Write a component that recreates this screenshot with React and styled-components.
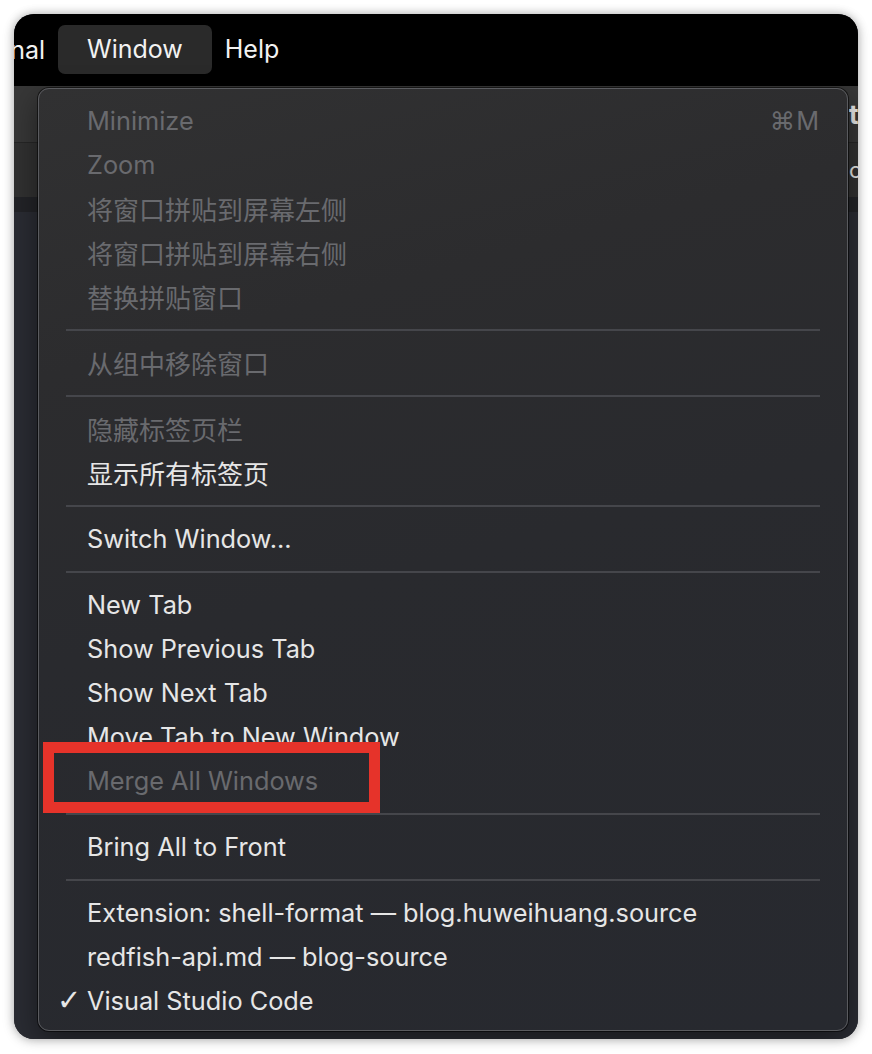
import React from "react";
import styled, { createGlobalStyle } from "styled-components";

const Global = createGlobalStyle`
  html, body { margin: 0; padding: 0; background: #ffffff; }
  body { font-family: Inter, "Noto Sans CJK SC", sans-serif; -webkit-font-smoothing: antialiased; }
  #root { height: 1054px; overflow: hidden; }
`;

const Page = styled.div`
  height: 1054px;
  padding: 14px 14px 15px 14px;
  box-sizing: border-box;
`;

const Window = styled.div`
  position: relative;
  width: 844px;
  height: 1025px;
  border-radius: 20px;
  overflow: hidden;
  background: #2a2c33;
  box-shadow: 0 0 10px rgba(0, 0, 0, 0.28), 0 2px 14px rgba(0, 0, 0, 0.12);
  display: flex;
  flex-direction: column;
`;

const MenuBar = styled.div`
  height: 72px;
  background: #000;
  display: flex;
  align-items: center;
  flex-shrink: 0;
  font-family: Inter, sans-serif;
  font-size: 25px;
  color: #f2f2f2;
`;

const ClippedTitle = styled.div`
  width: 31px;
  overflow: hidden;
  display: flex;
  justify-content: flex-end;
  white-space: nowrap;
  margin-right: 13px;
`;

const BarTitle = styled.div`
  height: 49px;
  margin-top: -2px;
  display: flex;
  align-items: center;
  padding: 0 ${(p) => (p.$active ? "29px" : "13px")};
  border-radius: 7px;
  background: ${(p) => (p.$active ? "#2a2a2a" : "transparent")};
`;

const Body = styled.div`
  flex: 1;
  display: flex;
  flex-direction: column;
`;

const HeaderRow = styled.div`
  height: ${(p) => p.$h}px;
  background: ${(p) => p.$bg};
  border-bottom: ${(p) => (p.$line ? "1px solid #262626" : "none")};
  display: flex;
  align-items: center;
  padding-left: 835px;
  box-sizing: border-box;
  white-space: nowrap;
  overflow: hidden;
  color: #e8e8e8;
  font-size: ${(p) => p.$fs}px;
  font-weight: ${(p) => p.$fw};
  flex-shrink: 0;
`;

const Strip = styled.div`
  height: 15px;
  background: #222327;
  flex-shrink: 0;
`;

const Editor = styled.div`
  flex: 1;
  background: #2a2c33;
`;

const Menu = styled.div`
  position: absolute;
  left: 24px;
  top: 74px;
  width: 810px;
  box-sizing: border-box;
  padding: 10px 0 7px 0;
  border: 1px solid #5a5b5f;
  border-radius: 11px;
  background: linear-gradient(165deg, #313132 0%, #2c2c2e 25%, #292a2e 50%, #27292f 100%);
  box-shadow: 0 0 0 1px rgba(0, 0, 0, 0.55), 0 10px 30px rgba(0, 0, 0, 0.45);
  font-family: Inter, "Noto Sans CJK SC", sans-serif;
  font-size: 25.3px;
`;

const Item = styled.div`
  height: 44px;
  display: flex;
  align-items: center;
  padding: 0 27px 2px 18px;
  box-sizing: border-box;
  color: ${(p) => (p.$disabled ? "#696a6e" : "#e6e6e6")};
  white-space: nowrap;
`;

const Check = styled.span`
  width: 30px;
  flex-shrink: 0;
  font-family: "DejaVu Sans", sans-serif;
  font-size: 29px;
  line-height: 1;
`;

const Label = styled.span`
  flex: 1;
  font-size: ${(p) => (p.$cjk ? "26px" : "inherit")};
  font-family: ${(p) => (p.$cjk ? '"Noto Sans CJK SC", sans-serif' : "inherit")};
`;

const Shortcut = styled.span`
  color: #696a6e;
  letter-spacing: 1px;
`;

const Separator = styled.div`
  height: 22px;
  display: flex;
  align-items: center;
  padding: 0 27px 0 27px;
  &::after {
    content: "";
    flex: 1;
    height: 2px;
    background: #45464b;
  }
`;

const Highlight = styled.div`
  position: absolute;
  left: 29px;
  top: 728px;
  width: 337px;
  height: 71px;
  box-sizing: border-box;
  border: 11px solid #e6332a;
  pointer-events: none;
`;

const sections = [
  [
    { label: "Minimize", disabled: true, shortcut: "⌘M" },
    { label: "Zoom", disabled: true },
    { label: "将窗口拼贴到屏幕左侧", disabled: true, cjk: true },
    { label: "将窗口拼贴到屏幕右侧", disabled: true, cjk: true },
    { label: "替换拼贴窗口", disabled: true, cjk: true },
  ],
  [{ label: "从组中移除窗口", disabled: true, cjk: true }],
  [
    { label: "隐藏标签页栏", disabled: true, cjk: true },
    { label: "显示所有标签页", cjk: true },
  ],
  [{ label: "Switch Window..." }],
  [
    { label: "New Tab" },
    { label: "Show Previous Tab" },
    { label: "Show Next Tab" },
    { label: "Move Tab to New Window" },
    { label: "Merge All Windows", disabled: true },
  ],
  [{ label: "Bring All to Front" }],
  [
    { label: "Extension: shell-format — blog.huweihuang.source" },
    { label: "redfish-api.md — blog-source" },
    { label: "Visual Studio Code", checked: true },
  ],
];

export default function App() {
  return (
    <Page>
      <Global />
      <Window>
        <MenuBar>
          <ClippedTitle>Terminal</ClippedTitle>
          <BarTitle $active>Window</BarTitle>
          <BarTitle>Help</BarTitle>
        </MenuBar>
        <Body>
          <HeaderRow $h={57} $bg="#373737" $line $fs={26} $fw={700}>
            t
          </HeaderRow>
          <HeaderRow $h={54} $bg="#313131" $fs={22} $fw={400}>
            c
          </HeaderRow>
          <Strip />
          <Editor />
        </Body>
        <Menu>
          {sections.map((sec, i) => (
            <React.Fragment key={i}>
              {i > 0 && <Separator />}
              {sec.map((it) => (
                <Item key={it.label} $disabled={it.disabled}>
                  <Check>{it.checked ? "✓" : ""}</Check>
                  <Label $cjk={it.cjk}>{it.label}</Label>
                  {it.shortcut && <Shortcut>{it.shortcut}</Shortcut>}
                </Item>
              ))}
            </React.Fragment>
          ))}
        </Menu>
        <Highlight />
      </Window>
    </Page>
  );
}
